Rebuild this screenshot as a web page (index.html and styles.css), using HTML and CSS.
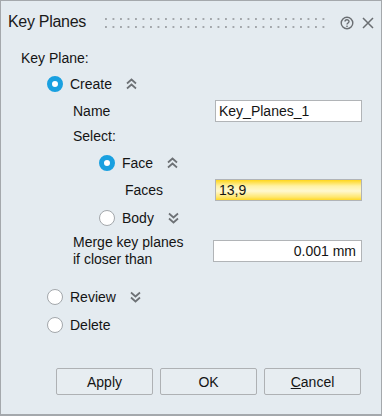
FILE: index.html
```html
<!DOCTYPE html>
<html lang="en">
<head>
    <meta charset="UTF-8">
    <meta name="viewport" content="width=device-width, initial-scale=1.0">
    <title>Key Planes</title>
    <link rel="stylesheet" href="styles.css">
</head>
<body>
    <div class="dialog">
        <div class="title-bar">
            <span class="title">Key Planes</span>
            <span class="grip"></span>
            <svg class="help-icon" width="14" height="14" viewBox="0 0 14 14">
                <circle cx="7" cy="7" r="5.8" fill="none" stroke="#6a6e72" stroke-width="1.4"/>
                <path d="M5 5.6 C5 3.2 9 3.2 9 5.5 C9 7 7 7 7 8.6" fill="none" stroke="#6a6e72" stroke-width="1.4"/>
                <rect x="6.3" y="9.6" width="1.4" height="1.4" fill="#6a6e72"/>
            </svg>
            <svg class="close-icon" width="12" height="12" viewBox="0 0 12 12">
                <path d="M1 1 L11 11 M11 1 L1 11" stroke="#6a6e72" stroke-width="1.5"/>
            </svg>
        </div>

        <div class="content">
            <div class="row key-plane-row">Key Plane:</div>

            <div class="row create-row">
                <span class="radio checked"></span>
                <span class="radio-label">Create</span>
                <svg class="chevron" width="11" height="12" viewBox="0 0 11 12">
                    <path d="M1 5.5 L5.5 1.5 L10 5.5 M1 10.5 L5.5 6.5 L10 10.5" fill="none" stroke="#6d7175" stroke-width="1.7"/>
                </svg>
            </div>

            <div class="row name-row">
                <span class="field-label">Name</span>
                <div class="text-box">Key_Planes_1</div>
            </div>

            <div class="row select-row">
                <span class="field-label">Select:</span>
            </div>

            <div class="row face-row">
                <span class="radio checked"></span>
                <span class="radio-label">Face</span>
                <svg class="chevron" width="11" height="12" viewBox="0 0 11 12">
                    <path d="M1 5.5 L5.5 1.5 L10 5.5 M1 10.5 L5.5 6.5 L10 10.5" fill="none" stroke="#6d7175" stroke-width="1.7"/>
                </svg>
            </div>

            <div class="row faces-row">
                <span class="faces-label">Faces</span>
                <div class="text-box active-box">13,9</div>
            </div>

            <div class="row body-row">
                <span class="radio"></span>
                <span class="radio-label">Body</span>
                <svg class="chevron" width="11" height="12" viewBox="0 0 11 12">
                    <path d="M1 1.5 L5.5 5.5 L10 1.5 M1 6.5 L5.5 10.5 L10 6.5" fill="none" stroke="#6d7175" stroke-width="1.7"/>
                </svg>
            </div>

            <div class="row merge-row">
                <span class="field-label merge-label">Merge key planes<br>if closer than</span>
                <div class="text-box number-box">0.001 mm</div>
            </div>

            <div class="row review-row">
                <span class="radio"></span>
                <span class="radio-label">Review</span>
                <svg class="chevron" width="11" height="12" viewBox="0 0 11 12">
                    <path d="M1 1.5 L5.5 5.5 L10 1.5 M1 6.5 L5.5 10.5 L10 6.5" fill="none" stroke="#6d7175" stroke-width="1.7"/>
                </svg>
            </div>

            <div class="row delete-row">
                <span class="radio"></span>
                <span class="radio-label">Delete</span>
            </div>

            <div class="button-row">
                <button class="dialog-button">Apply</button>
                <button class="dialog-button">OK</button>
                <button class="dialog-button"><u>C</u>ancel</button>
            </div>
        </div>
    </div>
</body>
</html>
```

FILE: styles.css
```css
body {
    margin: 0;
    font-family: "Liberation Sans", Arial, sans-serif;
    font-size: 14px;
    color: #141414;
}

.dialog {
    width: 382px;
    height: 416px;
    box-sizing: border-box;
    border: 1px solid #a4a8ac;
    border-bottom-width: 2px;
    background-color: #e4ebf0;
}

.title-bar {
    height: 45px;
    display: flex;
    align-items: center;
    padding: 0 9px 3px 7px;
    box-sizing: border-box;
}

.title {
    font-size: 16px;
    letter-spacing: -0.3px;
    color: #1a1a1a;
    white-space: nowrap;
    flex-shrink: 0;
}

/* two rows of little square dots */
.grip {
    width: 222px;
    height: 10px;
    flex-shrink: 0;
    margin-left: 19px;
    margin-top: 2px;
    background-image:
        linear-gradient(to bottom, transparent 2px, #e4ebf0 2px),
        linear-gradient(to right, #a3a7ab 2px, transparent 2px);
    background-size: 7.5px 8px;
}

.help-icon {
    margin-left: 13px;
    margin-top: 1px;
    flex-shrink: 0;
}

.close-icon {
    margin-left: 8px;
    margin-top: 1px;
    flex-shrink: 0;
}

.content {
    padding: 0 19px 0 20px;
}

.row {
    display: flex;
    align-items: center;
}

.key-plane-row {
    height: 24px;
}

.create-row {
    height: 28px;
    padding-left: 26px;
}

.name-row {
    height: 26px;
    padding-left: 52px;
}

.select-row {
    height: 24px;
    padding-left: 52px;
}

.face-row {
    height: 30px;
    padding-left: 78px;
}

.faces-row {
    height: 24px;
    padding-left: 104px;
}

.body-row {
    height: 32px;
    padding-left: 78px;
}

.merge-row {
    height: 34px;
    padding-left: 52px;
}

.review-row {
    height: 30px;
    margin-top: 14px;
    padding-left: 26px;
}

.delete-row {
    height: 26px;
    padding-left: 26px;
}

.radio {
    width: 16px;
    height: 16px;
    box-sizing: border-box;
    border-radius: 50%;
    border: 1px solid #a3a7ab;
    background-color: #fff;
    flex-shrink: 0;
}

.radio.checked {
    border: 5px solid #19a0e0;
    background-color: #fff;
}

.radio-label {
    margin-left: 7px;
}

.chevron {
    margin-left: 14px;
}

.field-label {
    line-height: 17px;
}

.text-box {
    margin-left: auto;
    width: 147px;
    height: 22px;
    box-sizing: border-box;
    border: 1px solid #b1b4b7;
    background-color: #fff;
    padding: 0 4px 0 3px;
    line-height: 20px;
}

.active-box {
    background: linear-gradient(to bottom, #ffd61c 0%, #fff2a6 30%, #fff8d0 55%, #ffe770 85%, #ffd828 100%);
}

.number-box {
    width: 149px;
    text-align: right;
    padding-right: 5px;
}

.button-row {
    display: flex;
    justify-content: flex-end;
    gap: 7px;
    margin-top: 30px;
    margin-right: 1px;
}

.dialog-button {
    width: 97px;
    height: 27px;
    border: 1px solid #aeb1b4;
    border-radius: 2px;
    background-color: #e7edf1;
    font-family: "Liberation Sans", Arial, sans-serif;
    font-size: 14px;
    color: #141414;
    padding: 0;
}
```
